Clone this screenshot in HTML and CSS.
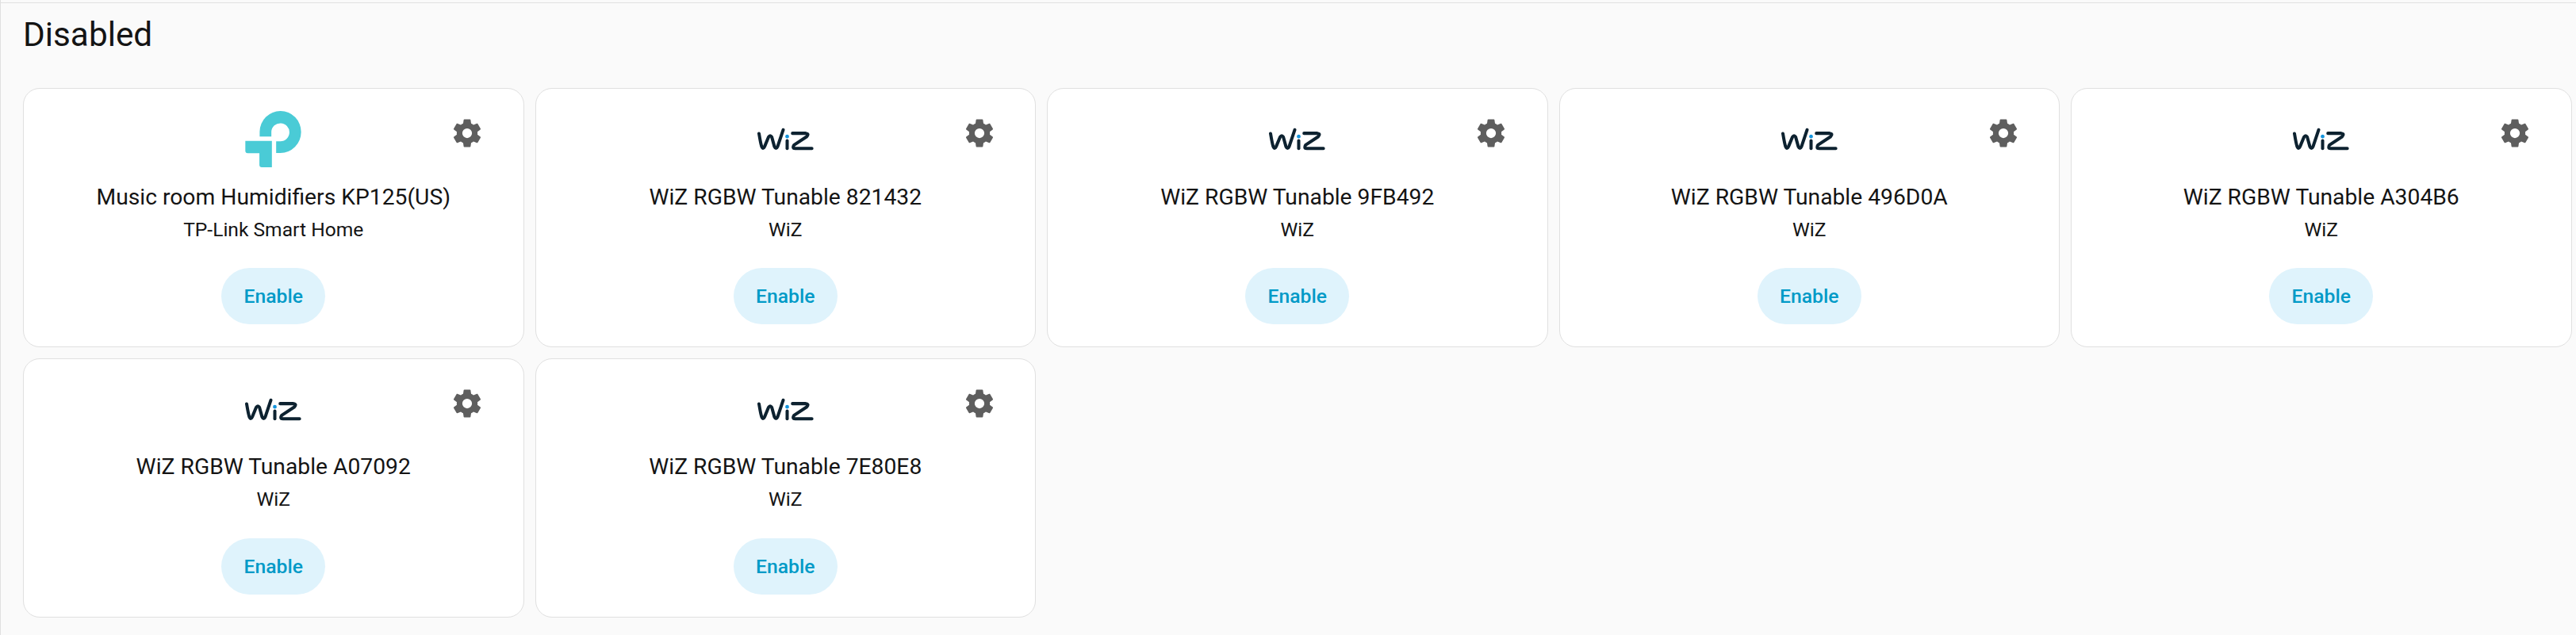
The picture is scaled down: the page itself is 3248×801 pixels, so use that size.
FILE: index.html
```html
<!DOCTYPE html>
<html lang="en">
<head>
    <meta charset="UTF-8">
    <meta name="viewport" content="width=device-width, initial-scale=1.0">
    <title>Disabled integrations</title>
    <link rel="stylesheet" href="styles.css">
</head>
<body>
    <!-- Shared icons -->
    <svg class="icon-defs" width="0" height="0">
        <symbol id="cog" viewBox="0 0 24 24">
            <path d="M12,15.5A3.5,3.5 0 0,1 8.5,12A3.5,3.5 0 0,1 12,8.5A3.5,3.5 0 0,1 15.5,12A3.5,3.5 0 0,1 12,15.5M19.43,12.97C19.47,12.65 19.5,12.33 19.5,12C19.5,11.67 19.47,11.34 19.43,11L21.54,9.37C21.73,9.22 21.78,8.95 21.66,8.73L19.66,5.27C19.54,5.05 19.27,4.96 19.05,5.05L16.56,6.05C16.04,5.66 15.5,5.32 14.87,5.07L14.5,2.42C14.46,2.18 14.25,2 14,2H10C9.75,2 9.54,2.18 9.5,2.42L9.13,5.07C8.5,5.32 7.96,5.66 7.44,6.05L4.95,5.05C4.73,4.96 4.46,5.05 4.34,5.27L2.34,8.73C2.21,8.95 2.27,9.22 2.46,9.37L4.57,11C4.53,11.34 4.5,11.67 4.5,12C4.5,12.33 4.53,12.65 4.57,12.97L2.46,14.63C2.27,14.78 2.21,15.05 2.34,15.27L4.34,18.73C4.46,18.95 4.73,19.03 4.95,18.95L7.44,17.94C7.96,18.34 8.5,18.68 9.13,18.93L9.5,21.58C9.54,21.82 9.75,22 10,22H14C14.25,22 14.46,21.82 14.5,21.58L14.87,18.93C15.5,18.67 16.04,18.34 16.56,17.94L19.05,18.95C19.27,19.03 19.54,18.95 19.66,18.73L21.66,15.27C21.78,15.05 21.73,14.78 21.54,14.63L19.43,12.97Z"/>
        </symbol>
        <symbol id="wiz" viewBox="75 0 212 212">
            <g fill="none" stroke="#0d2230" stroke-width="12" stroke-linecap="round" stroke-linejoin="round">
                <path d="M81 85C84 103 87 122 91 134Q96 147 102 134L117 98Q123 88 129 98L139 134Q145 147 151 134L172 71"/>
                <path d="M187 112V141"/>
                <path d="M207 84H257Q271 86 260 97L213 128Q205 141 217 141H280"/>
            </g>
            <circle cx="187" cy="96" r="7" fill="#1494dd"/>
        </symbol>
        <symbol id="tplink" viewBox="87 60 212 212">
            <path fill="#4acbd6" d="M142 156V138A78 79 0 1 1 220 218H204V174H220A34 34 0 1 0 186 138V156Z"/>
            <path fill="#4acbd6" d="M88 173H188V272H150Q141 272 141 263V219H97Q88 219 88 210Z"/>
        </symbol>
    </svg>

    <main class="panel">
        <h1>Disabled</h1>
        <div class="container">
            <div class="card">
                <button class="settings" aria-label="Settings"><svg><use href="#cog"/></svg></button>
                <svg class="logo"><use href="#tplink"/></svg>
                <h2>Music room Humidifiers KP125(US)</h2>
                <h3>TP-Link Smart Home</h3>
                <button class="enable">Enable</button>
            </div>
            <div class="card">
                <button class="settings" aria-label="Settings"><svg><use href="#cog"/></svg></button>
                <svg class="logo"><use href="#wiz"/></svg>
                <h2>WiZ RGBW Tunable 821432</h2>
                <h3>WiZ</h3>
                <button class="enable">Enable</button>
            </div>
            <div class="card">
                <button class="settings" aria-label="Settings"><svg><use href="#cog"/></svg></button>
                <svg class="logo"><use href="#wiz"/></svg>
                <h2>WiZ RGBW Tunable 9FB492</h2>
                <h3>WiZ</h3>
                <button class="enable">Enable</button>
            </div>
            <div class="card">
                <button class="settings" aria-label="Settings"><svg><use href="#cog"/></svg></button>
                <svg class="logo"><use href="#wiz"/></svg>
                <h2>WiZ RGBW Tunable 496D0A</h2>
                <h3>WiZ</h3>
                <button class="enable">Enable</button>
            </div>
            <div class="card">
                <button class="settings" aria-label="Settings"><svg><use href="#cog"/></svg></button>
                <svg class="logo"><use href="#wiz"/></svg>
                <h2>WiZ RGBW Tunable A304B6</h2>
                <h3>WiZ</h3>
                <button class="enable">Enable</button>
            </div>
            <div class="card">
                <button class="settings" aria-label="Settings"><svg><use href="#cog"/></svg></button>
                <svg class="logo"><use href="#wiz"/></svg>
                <h2>WiZ RGBW Tunable A07092</h2>
                <h3>WiZ</h3>
                <button class="enable">Enable</button>
            </div>
            <div class="card">
                <button class="settings" aria-label="Settings"><svg><use href="#cog"/></svg></button>
                <svg class="logo"><use href="#wiz"/></svg>
                <h2>WiZ RGBW Tunable 7E80E8</h2>
                <h3>WiZ</h3>
                <button class="enable">Enable</button>
            </div>
        </div>
    </main>
</body>
</html>
```
FILE: styles.css
```css
* {
    box-sizing: border-box;
}
body {
    margin: 0;
    padding-top: 3px;
    height: 801px;
    overflow: hidden;
    border-left: 1px solid #e0e0e0;
    background: #fafafa;
    color: #141414;
    font-family: Roboto, "Noto Sans", sans-serif;
}
.icon-defs {
    position: absolute;
}
.panel {
    border-top: 1px solid #e0e0e0;
    padding: 0 5.5px 0 28px;
}
h1 {
    margin: 0 0 26.2px;
    height: 81px;
    font-size: 42.3px;
    font-weight: 400;
    line-height: 80px;
}
.container {
    display: grid;
    grid-template-columns: repeat(5, 1fr);
    gap: 14px;
}
.card {
    position: relative;
    display: flex;
    flex-direction: column;
    align-items: center;
    height: 326.8px;
    padding: 28px;
    background: white;
    border: 1px solid #e0e0e0;
    border-radius: 21px;
}
.logo {
    width: 71px;
    height: 71px;
    flex-shrink: 0;
}
h2 {
    margin: 16.5px 0 0;
    font-size: 28.25px;
    font-weight: 400;
    line-height: 42px;
    white-space: nowrap;
}
h3 {
    margin: 0;
    font-size: 24.6px;
    font-weight: 400;
    line-height: 40px;
}
button {
    border: none;
    padding: 0;
    font-family: inherit;
    cursor: pointer;
}
.settings {
    position: absolute;
    top: 35px;
    right: 49.5px;
    width: 42px;
    height: 42px;
    background: none;
}
.settings svg {
    display: block;
    width: 42px;
    height: 42px;
    fill: #5e5e5e;
}
.enable {
    margin-top: 28.4px;
    width: 131px;
    height: 71px;
    flex-shrink: 0;
    border-radius: 36px;
    background: #dff3fc;
    color: #009ac7;
    font-size: 24.7px;
    font-weight: 500;
}
```
